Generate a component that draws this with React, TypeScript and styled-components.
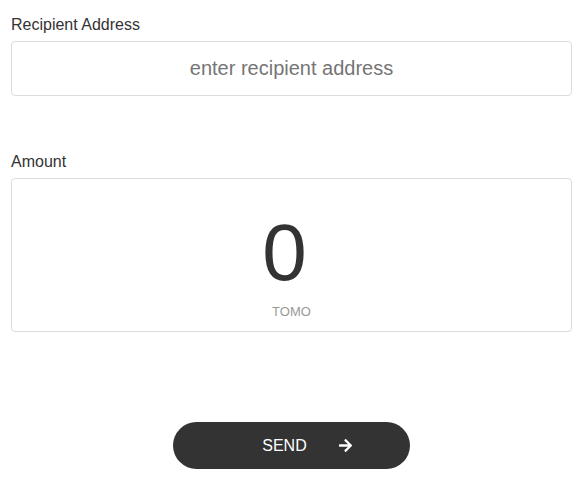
import React, {useState} from 'react';
import styled, {createGlobalStyle} from 'styled-components';
import {FaArrowRight} from 'react-icons/fa';

const GlobalStyle = createGlobalStyle`
    body {
        margin: 0;
        background: #fff;
        font-family: "Liberation Sans", Arial, sans-serif;
    }
`;

const Form = styled.form`
    display: flex;
    flex-direction: column;
    padding: 15px 13px 0 11px;
`;

const Field = styled.div<{gap?: number}>`
    display: flex;
    flex-direction: column;
    margin-bottom: ${(p) => p.gap ?? 0}px;
`;

const Label = styled.label`
    font-size: 16px;
    line-height: 20px;
    color: #333;
    margin-bottom: 6px;
`;

const AddressInput = styled.input`
    box-sizing: border-box;
    height: 55px;
    width: 100%;
    border: 1px solid #dcdcdc;
    border-radius: 4px;
    padding: 0 12px;
    font-family: inherit;
    font-size: 20px;
    color: #333;
    text-align: center;
    outline: none;

    &::placeholder {
        color: #757575;
    }
`;

const AmountBox = styled.div`
    box-sizing: border-box;
    height: 154px;
    border: 1px solid #dcdcdc;
    border-radius: 4px;
    display: flex;
    flex-direction: column;
    align-items: center;
    padding-top: 34px;
`;

const AmountValue = styled.div`
    margin-right: 14px;
    font-size: 80px;
    line-height: 80px;
    color: #333;
`;

const Unit = styled.div`
    margin-top: 11px;
    font-size: 13px;
    line-height: 16px;
    color: #999;
    text-transform: uppercase;
`;

const SendButton = styled.button`
    align-self: center;
    box-sizing: border-box;
    width: 237px;
    height: 47px;
    border: 0;
    border-radius: 24px;
    background: #333;
    color: #fff;
    font-family: inherit;
    font-size: 16px;
    display: flex;
    align-items: center;
    justify-content: center;
    gap: 31px;
    padding: 0 0 0 32px;
    cursor: pointer;
`;

export default function App() {
    const [address, setAddress] = useState('');

    return (
        <>
            <GlobalStyle/>
            <Form onSubmit={(e) => e.preventDefault()}>
                <Field gap={56}>
                    <Label htmlFor='recipient'>{'Recipient Address'}</Label>
                    <AddressInput
                        id='recipient'
                        placeholder='enter recipient address'
                        value={address}
                        onChange={(e) => setAddress(e.target.value)}
                    />
                </Field>
                <Field gap={90}>
                    <Label>{'Amount'}</Label>
                    <AmountBox>
                        <AmountValue>{'0'}</AmountValue>
                        <Unit>{'TOMO'}</Unit>
                    </AmountBox>
                </Field>
                <SendButton type='submit'>
                    <span>{'SEND'}</span>
                    <FaArrowRight size={15}/>
                </SendButton>
            </Form>
        </>
    );
}
